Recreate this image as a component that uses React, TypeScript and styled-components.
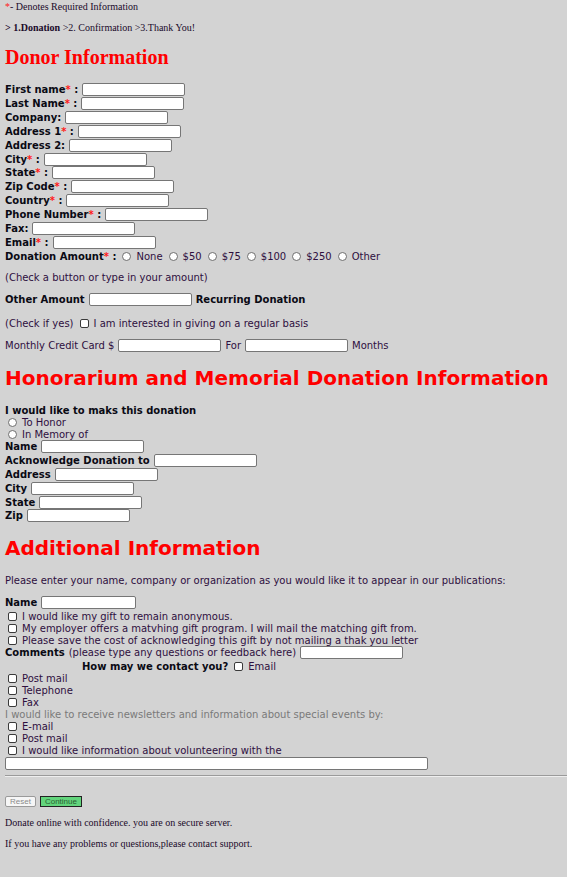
import React from "react";
import styled, { createGlobalStyle } from "styled-components";

const Global = createGlobalStyle`
  html, body { margin: 0; padding: 0; background: #d3d3d3; }
  body { font-family: "DejaVu Sans", Verdana, sans-serif; }
`;

const Page = styled.div`
  background: #d3d3d3;
  min-height: 877px;
  padding: 0 0 0 5px;
  display: flex;
  flex-direction: column;
  font-family: "DejaVu Sans", Verdana, sans-serif;
  font-size: 10px;
  color: #2e0f3e;
  overflow: hidden;
`;

const Line = styled.div<{ $h?: number; $mt?: number; $indent?: number }>`
  display: flex;
  align-items: center;
  white-space: nowrap;
  height: ${(p) => p.$h ?? 12}px;
  margin-top: ${(p) => p.$mt ?? 0}px;
  padding-left: ${(p) => p.$indent ?? 0}px;
  flex-shrink: 0;
`;

const SerifText = styled.span<{ $bold?: boolean }>`
  font-family: "Liberation Serif", "Times New Roman", serif;
  font-size: 10px;
  color: #1a0a2a;
  font-weight: ${(p) => (p.$bold ? "bold" : "normal")};
`;

const Star = styled.span`
  color: #ff1a1a;
`;

const SerifHeading = styled.h1`
  margin: 12px 0 0;
  height: 24px;
  line-height: 24px;
  font-family: "Liberation Serif", "Times New Roman", serif;
  font-size: 20px;
  font-weight: bold;
  color: #ff0000;
  white-space: nowrap;
`;

const SansHeading = styled.h2<{ $mt: number }>`
  margin: ${(p) => p.$mt}px 0 0;
  height: 24px;
  line-height: 24px;
  font-family: "DejaVu Sans", Verdana, sans-serif;
  font-size: 20px;
  font-weight: bold;
  color: #ff0000;
  white-space: nowrap;
`;

const Label = styled.b`
  color: #0a0a14;
  font-weight: bold;
  margin-right: 4px;
`;

const Text = styled.span<{ $gap?: number }>`
  margin-right: ${(p) => p.$gap ?? 0}px;
`;

const GrayText = styled.span`
  color: #7a7a7a;
`;

const Field = styled.input<{ $w?: number; $gapL?: number; $gapR?: number }>`
  box-sizing: border-box;
  width: ${(p) => p.$w ?? 103}px;
  height: 13px;
  margin: 0 ${(p) => p.$gapR ?? 0}px 0 ${(p) => p.$gapL ?? 0}px;
  padding: 0 2px;
  border: 1px solid #767676;
  border-radius: 2px;
  background: #fff;
  font-size: 10px;
  outline: none;
`;

const Radio = styled.input.attrs({ type: "radio" })<{ $ml?: number }>`
  appearance: none;
  box-sizing: border-box;
  width: 9px;
  height: 9px;
  margin: 0 5px 0 ${(p) => p.$ml ?? 4}px;
  border: 1px solid #6e6e6e;
  border-radius: 50%;
  background: #fff;
  flex-shrink: 0;
`;

const Check = styled.input.attrs({ type: "checkbox" })<{ $ml?: number }>`
  appearance: none;
  box-sizing: border-box;
  width: 9px;
  height: 9px;
  margin: 0 5px 0 ${(p) => p.$ml ?? 3}px;
  border: 1px solid #3a3a3a;
  border-radius: 2px;
  background: #fff;
  flex-shrink: 0;
`;

const Rule = styled.hr`
  margin: 5px 0 0;
  height: 0;
  border: none;
  border-top: 1px solid #9a9a9a;
  border-bottom: 1px solid #eeeeee;
  flex-shrink: 0;
`;

const Buttons = styled.div`
  display: flex;
  gap: 4px;
  margin-top: 19px;
  height: 11px;
  flex-shrink: 0;
`;

const Btn = styled.button<{ $primary?: boolean }>`
  box-sizing: border-box;
  height: 11px;
  padding: 0 4px;
  font-family: "Liberation Sans", Arial, sans-serif;
  font-size: 8px;
  line-height: 9px;
  border-radius: ${(p) => (p.$primary ? "0" : "2px")};
  border: 1px solid ${(p) => (p.$primary ? "#222" : "#9a9a9a")};
  background: ${(p) => (p.$primary ? "#62d47c" : "#f6f6f6")};
  color: ${(p) => (p.$primary ? "#2a5e33" : "#8a8a8a")};
`;

type Req = { label: string; req?: boolean; w?: number };

const donorRows: Req[] = [
  { label: "First name", req: true },
  { label: "Last Name", req: true },
  { label: "Company:" },
  { label: "Address 1", req: true },
  { label: "Address 2:" },
  { label: "City", req: true },
  { label: "State", req: true },
  { label: "Zip Code", req: true },
  { label: "Country", req: true },
  { label: "Phone Number", req: true },
  { label: "Fax:" },
  { label: "Email", req: true },
];

const honorRows = ["Name", "Acknowledge Donation to", "Address", "City", "State", "Zip"];

const amounts = ["None", "$50", "$75", "$100", "$250", "Other"];

export default function App() {
  return (
    <>
      <Global />
      <Page>
        <Line $h={12}>
          <SerifText>
            <Star>*</Star>- Denotes Required Information
          </SerifText>
        </Line>
        <Line $h={12} $mt={9}>
          <SerifText $bold>&gt; 1.Donation</SerifText>
          <SerifText>&nbsp;&gt;2. Confirmation &gt;3.Thank You!</SerifText>
        </Line>
        <SerifHeading>Donor Information</SerifHeading>

        {donorRows.map((r, i) => (
          <Line key={r.label} $h={13.85} $mt={i === 0 ? 14 : 0}>
            <Label>
              {r.label}
              {r.req && (
                <>
                  <Star>*</Star> :
                </>
              )}
            </Label>
            <Field />
          </Line>
        ))}
        <Line $h={13.85}>
          <Label>
            Donation Amount<Star>*</Star> :
          </Label>
          {amounts.map((a, i) => (
            <React.Fragment key={a}>
              <Radio name="amt" $ml={i === 0 ? 2 : 6} />
              <Text>{a}</Text>
            </React.Fragment>
          ))}
        </Line>

        <Line $h={12} $mt={9}>
          <Text>(Check a button or type in your amount)</Text>
        </Line>
        <Line $h={14} $mt={9}>
          <Label>Other Amount</Label>
          <Field $gapR={4} />
          <Label>Recurring Donation</Label>
        </Line>
        <Line $h={14} $mt={10}>
          <Text>(Check if yes)</Text>
          <Check $ml={6} />
          <Text>I am interested in giving on a regular basis</Text>
        </Line>
        <Line $h={14} $mt={8}>
          <Text $gap={4}>Monthly Credit Card $</Text>
          <Field $gapR={4} />
          <Text $gap={4}>For</Text>
          <Field $gapR={4} />
          <Text>Months</Text>
        </Line>

        <SansHeading $mt={13}>Honorarium and Memorial Donation Information</SansHeading>
        <Line $h={12} $mt={15}>
          <Label>I would like to maks this donation</Label>
        </Line>
        <Line $h={12}>
          <Radio name="hon" $ml={3} />
          <Text>To Honor</Text>
        </Line>
        <Line $h={11}>
          <Radio name="hon" $ml={3} />
          <Text>In Memory of</Text>
        </Line>
        {honorRows.map((l) => (
          <Line key={l} $h={13.8}>
            <Label>{l}</Label>
            <Field />
          </Line>
        ))}

        <SansHeading $mt={13}>Additional Information</SansHeading>
        <Line $h={12} $mt={15}>
          <Text>Please enter your name, company or organization as you would like it to appear in our publications:</Text>
        </Line>
        <Line $h={14} $mt={9}>
          <Label>Name</Label>
          <Field $w={95} />
        </Line>
        <Line $h={12} $mt={1}>
          <Check />
          <Text>I would like my gift to remain anonymous.</Text>
        </Line>
        <Line $h={12}>
          <Check />
          <Text>My employer offers a matvhing gift program. I will mail the matching gift from.</Text>
        </Line>
        <Line $h={12}>
          <Check />
          <Text>Please save the cost of acknowledging this gift by not mailing a thak you letter</Text>
        </Line>
        <Line $h={12}>
          <Label>Comments</Label>
          <Text $gap={4}>(please type any questions or feedback here)</Text>
          <Field />
        </Line>
        <Line $h={13} $mt={1} $indent={77}>
          <Label>How may we contact you?</Label>
          <Check $ml={2} />
          <Text>Email</Text>
        </Line>
        {["Post mail", "Telephone", "Fax"].map((t) => (
          <Line key={t} $h={12}>
            <Check />
            <Text>{t}</Text>
          </Line>
        ))}
        <Line $h={12}>
          <GrayText>I would like to receive newsletters and information about special events by:</GrayText>
        </Line>
        {["E-mail", "Post mail", "I would like information about volunteering with the"].map((t) => (
          <Line key={t} $h={12}>
            <Check />
            <Text>{t}</Text>
          </Line>
        ))}
        <Line $h={13}>
          <Field $w={423} />
        </Line>
        <Rule />
        <Buttons>
          <Btn type="reset">Reset</Btn>
          <Btn type="button" $primary>
            Continue
          </Btn>
        </Buttons>
        <Line $h={12} $mt={10}>
          <SerifText>Donate online with confidence. you are on secure server.</SerifText>
        </Line>
        <Line $h={12} $mt={9}>
          <SerifText>If you have any problems or questions,please contact support.</SerifText>
        </Line>
      </Page>
    </>
  );
}
